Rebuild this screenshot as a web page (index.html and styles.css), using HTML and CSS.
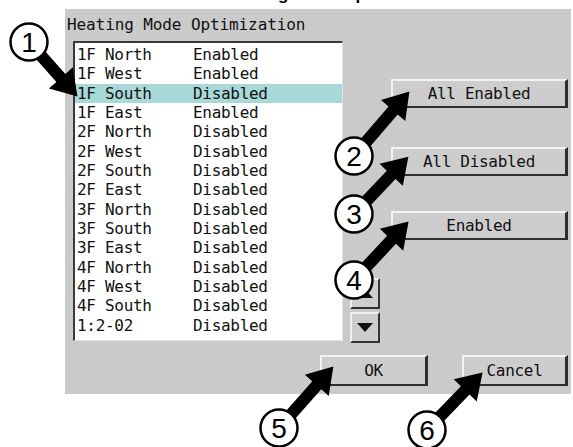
FILE: index.html
```html
<!DOCTYPE html>
<html lang="en">
<head>
  <meta charset="UTF-8">
  <title>Heating Mode Optimization</title>
  <link rel="stylesheet" href="styles.css">
</head>
<body>

<div class="page">
  <div class="caption"><span>Heating Mode Optimization</span></div>

  <div class="dialog">
    <div class="dialog-title">Heating Mode Optimization</div>

    <div class="dialog-body">
      <div class="listbox">
        <div class="row"><span class="zone">1F North</span><span>Enabled</span></div>
        <div class="row"><span class="zone">1F West</span><span>Enabled</span></div>
        <div class="row selected"><span class="zone">1F South</span><span>Disabled</span></div>
        <div class="row"><span class="zone">1F East</span><span>Enabled</span></div>
        <div class="row"><span class="zone">2F North</span><span>Disabled</span></div>
        <div class="row"><span class="zone">2F West</span><span>Disabled</span></div>
        <div class="row"><span class="zone">2F South</span><span>Disabled</span></div>
        <div class="row"><span class="zone">2F East</span><span>Disabled</span></div>
        <div class="row"><span class="zone">3F North</span><span>Disabled</span></div>
        <div class="row"><span class="zone">3F South</span><span>Disabled</span></div>
        <div class="row"><span class="zone">3F East</span><span>Disabled</span></div>
        <div class="row"><span class="zone">4F North</span><span>Disabled</span></div>
        <div class="row"><span class="zone">4F West</span><span>Disabled</span></div>
        <div class="row"><span class="zone">4F South</span><span>Disabled</span></div>
        <div class="row"><span class="zone">1:2-02</span><span>Disabled</span></div>
      </div>

      <div class="scroll">
        <div class="scroll-btn"><span class="tri-up"></span></div>
        <div class="scroll-btn"><span class="tri-down"></span></div>
      </div>

      <div class="actions">
        <div class="btn btn-wide">All Enabled</div>
        <div class="btn btn-wide btn-off">All Disabled</div>
        <div class="btn btn-wide btn-one">Enabled</div>
      </div>
    </div>

    <div class="dialog-foot">
      <div class="btn btn-ok">OK</div>
      <div class="btn btn-cancel">Cancel</div>
    </div>
  </div>

  <!-- numbered callouts drawn over the dialog -->
  <svg class="callouts" width="573" height="447" viewBox="0 0 573 447">
    <g fill="#000">
      <polygon transform="translate(29,42) rotate(48.4)" points="0,-6 48,-6 48,-16 73,0 48,16 48,6 0,6"/>
      <polygon transform="translate(354,156) rotate(-49.3)" points="0,-6 60,-6 60,-16 85,0 60,16 60,6 0,6"/>
      <polygon transform="translate(354,214) rotate(-46.5)" points="0,-6 54,-6 54,-16 79,0 54,16 54,6 0,6"/>
      <polygon transform="translate(354,280) rotate(-47)" points="0,-6 55,-6 55,-16 80,0 55,16 55,6 0,6"/>
      <polygon transform="translate(279,428) rotate(-48.5)" points="0,-6 57,-6 57,-16 82,0 57,16 57,6 0,6"/>
      <polygon transform="translate(427,430) rotate(-46)" points="0,-6 55,-6 55,-16 80,0 55,16 55,6 0,6"/>
    </g>
    <g class="marks">
      <circle cx="29" cy="42" r="18.5"/><text x="29" y="52">1</text>
      <circle cx="354" cy="156" r="18.5"/><text x="354" y="166">2</text>
      <circle cx="354" cy="214" r="18.5"/><text x="354" y="224">3</text>
      <circle cx="354" cy="280" r="18.5"/><text x="354" y="290">4</text>
      <circle cx="279" cy="428" r="18.5"/><text x="279" y="438">5</text>
      <circle cx="427" cy="430" r="18.5"/><text x="427" y="440">6</text>
    </g>
  </svg>
</div>

</body>
</html>
```

FILE: styles.css
```css
body {
  margin: 0;
  background: #fff;
}

.page {
  position: relative;
  width: 573px;
  height: 447px;
  overflow: hidden;
}

.caption {
  height: 9px;
  overflow: hidden;
  font-family: "Liberation Sans", Arial, sans-serif;
  font-size: 17px;
  font-weight: bold;
}
.caption span {
  display: block;
  margin-top: -15px;
  margin-left: 226px;
  line-height: 20px;
}

.dialog {
  margin-left: 65px;
  width: 506px;
  height: 385px;
  box-sizing: border-box;
  padding: 6px 0 8px 0;
  background: repeating-conic-gradient(#c6c6c6 0 25%, #cfcfcf 0 50%) 0 0 / 2px 2px;
  font-family: "DejaVu Sans Mono", "Liberation Mono", monospace;
  font-size: 16px;
  color: #111;
}

.dialog-title {
  line-height: 20px;
  padding-left: 2px;
  letter-spacing: -0.1px;
}

.dialog-body {
  display: flex;
  align-items: flex-start;
  margin: 6px 0 0 8px;
}

.listbox {
  width: 270px;
  height: 300px;
  box-sizing: border-box;
  padding-top: 2px;
  background: #fff;
  border-top: 2px solid #3a3a3a;
  border-left: 2px solid #3a3a3a;
  border-right: 1px solid #e2e2e2;
  border-bottom: 1px solid #e2e2e2;
}
.row {
  display: flex;
  height: 19.33px;
  line-height: 19.33px;
  padding-left: 2px;
  letter-spacing: -0.3px;
}
.row .zone {
  width: 116px;
}
.row.selected {
  background: #a8d8d8;
}

.scroll {
  display: flex;
  flex-direction: column;
  justify-content: flex-end;
  gap: 3px;
  height: 302px;
  margin-left: 7px;
}
.scroll-btn {
  width: 30px;
  height: 31px;
  box-sizing: border-box;
  display: flex;
  align-items: center;
  justify-content: center;
  background: #cdcdcd;
  border-top: 2px solid #f0f0f0;
  border-left: 2px solid #f0f0f0;
  border-right: 2px solid #333;
  border-bottom: 2px solid #333;
}
.tri-down {
  width: 0;
  height: 0;
  border-left: 8px solid transparent;
  border-right: 8px solid transparent;
  border-top: 9px solid #111;
}
.tri-up {
  width: 0;
  height: 0;
  border-left: 8px solid transparent;
  border-right: 8px solid transparent;
  border-bottom: 9px solid #111;
}

.actions {
  display: flex;
  flex-direction: column;
  margin-left: 11px;
  padding-top: 38px;
}

.btn {
  box-sizing: border-box;
  display: flex;
  align-items: center;
  justify-content: center;
  background: #cdcdcd;
  border-top: 2px solid #f2f2f2;
  border-left: 2px solid #f2f2f2;
  border-right: 3px solid #2e2e2e;
  border-bottom: 2px solid #2e2e2e;
  letter-spacing: -0.3px;
}
.btn-wide {
  width: 177px;
  height: 29px;
}
.btn-off {
  margin-top: 39px;
}
.btn-one {
  margin-top: 35px;
}

.dialog-foot {
  display: flex;
  margin-top: 12px;
}
.btn-ok {
  width: 108px;
  height: 31px;
  margin-left: 255px;
}
.btn-cancel {
  width: 106px;
  height: 31px;
  margin-left: 34px;
}

.callouts {
  position: absolute;
  top: 0;
  left: 0;
}
.marks circle {
  fill: #fff;
  stroke: #000;
  stroke-width: 2.5;
}
.marks text {
  font-family: "Liberation Sans", Arial, sans-serif;
  font-size: 28px;
  text-anchor: middle;
  fill: #000;
}
```
